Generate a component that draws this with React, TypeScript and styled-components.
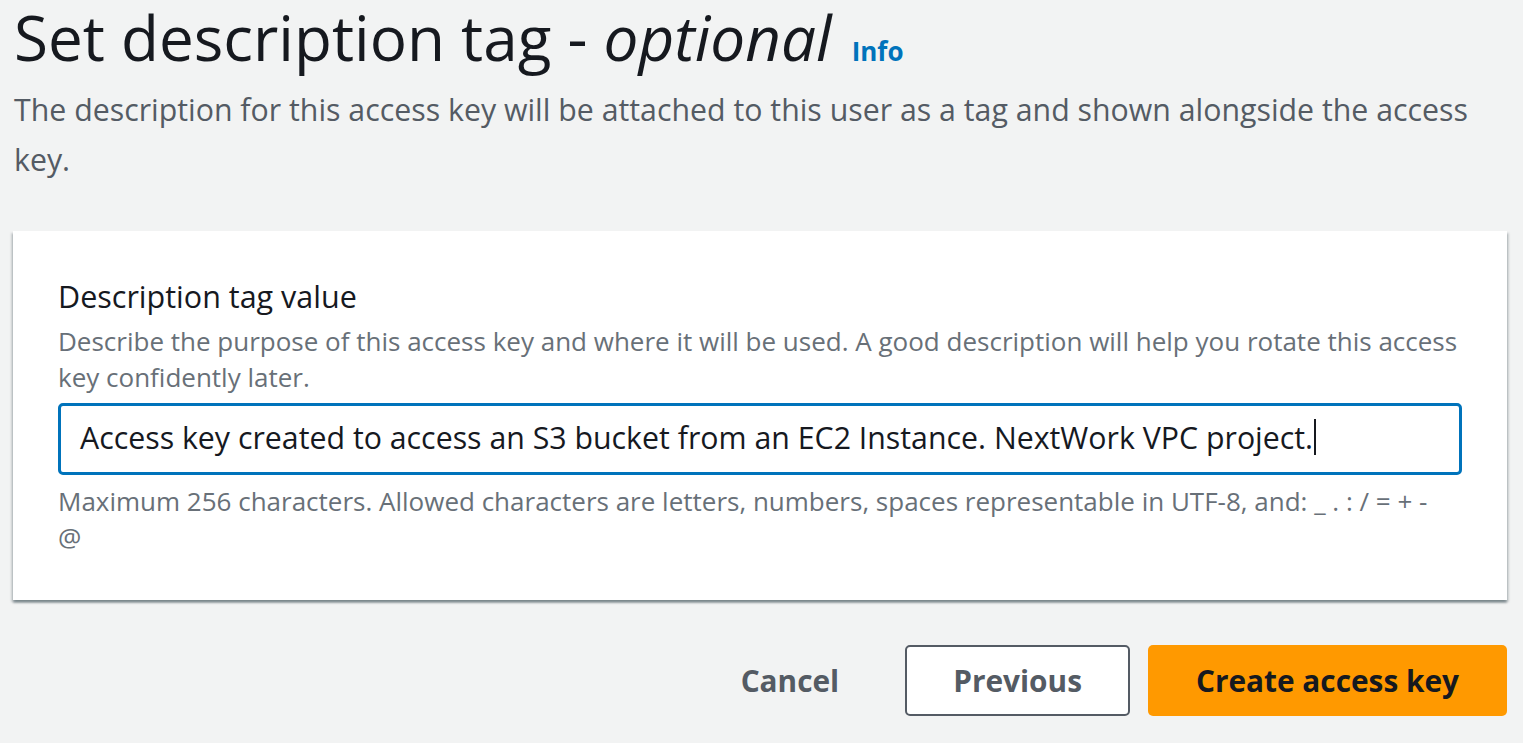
import React from "react";
import styled, { createGlobalStyle } from "styled-components";

const GlobalStyle = createGlobalStyle`
  body {
    margin: 0;
    background: #f2f3f3;
    font-family: "Open Sans", "Noto Sans", sans-serif;
    color: #16191f;
  }
`;

const Page = styled.div`
  padding: 0 16px 0 13px;
`;

const TitleRow = styled.div`
  display: flex;
  align-items: baseline;
  padding-left: 1px;
`;

const Title = styled.h1`
  margin: 0;
  font-size: 62px;
  line-height: 74px;
  font-weight: 400;
  color: #16191f;

  em {
    font-style: italic;
  }
`;

const InfoLink = styled.a`
  margin-left: 20px;
  font-size: 26px;
  font-weight: 700;
  color: #0073bb;
  text-decoration: none;
`;

const Description = styled.p`
  margin: 11px 0 0 1px;
  font-size: 30.3px;
  line-height: 50px;
  color: #545b64;
`;

const Card = styled.section`
  margin-top: 46px;
  background: #fff;
  padding: 47px 45px 45px 45px;
  box-shadow: 0 3px 2px 0 rgba(0, 28, 36, 0.3),
    2px 2px 2px 0 rgba(0, 28, 36, 0.15), -2px 2px 2px 0 rgba(0, 28, 36, 0.15);
`;

const Label = styled.div`
  font-size: 30.5px;
  line-height: 36px;
  color: #16191f;
`;

const Hint = styled.div<{ $top: number; $maxWidth?: number }>`
  margin-top: ${(p) => p.$top}px;
  max-width: ${(p) => (p.$maxWidth ? `${p.$maxWidth}px` : "none")};
  font-size: 26px;
  line-height: 36px;
  color: #687078;
`;

const InputBox = styled.div`
  margin-top: 8px;
  height: 72px;
  box-sizing: border-box;
  border: 3px solid #0073bb;
  border-radius: 5px;
  padding: 0 19px 4px;
  display: flex;
  align-items: center;
  font-size: 30.3px;
  color: #16191f;
  background: #fff;
`;

const Caret = styled.span`
  display: inline-block;
  width: 2px;
  height: 36px;
  margin-left: 1px;
  background: #16191f;
`;

const Footer = styled.div`
  display: flex;
  justify-content: flex-end;
  align-items: center;
  gap: 18px;
  margin-top: 45px;
`;

const Button = styled.button<{ $variant: "link" | "normal" | "primary" }>`
  height: 71px;
  box-sizing: border-box;
  font-family: inherit;
  font-size: 29.8px;
  font-weight: 700;
  border-radius: 5px;
  cursor: pointer;
  padding: 0 46px;
  border: 2px solid
    ${(p) => (p.$variant === "normal" ? "#545b64" : "transparent")};
  background: ${(p) =>
    p.$variant === "primary"
      ? "#ff9900"
      : p.$variant === "normal"
      ? "#fff"
      : "transparent"};
  color: ${(p) => (p.$variant === "primary" ? "#16191f" : "#545b64")};
`;

export default function App() {
  return (
    <Page>
      <GlobalStyle />
      <TitleRow>
        <Title>
          Set description tag - <em>optional</em>
        </Title>
        <InfoLink href="#">Info</InfoLink>
      </TitleRow>
      <Description>
        The description for this access key will be attached to this user as a
        tag and shown alongside the access key.
      </Description>

      <Card>
        <Label>Description tag value</Label>
        <Hint $top={9}>
          Describe the purpose of this access key and where it will be used. A
          good description will help you rotate this access key confidently
          later.
        </Hint>
        <InputBox>
          Access key created to access an S3 bucket from an EC2 Instance.
          NextWork VPC project.
          <Caret />
        </InputBox>
        <Hint $top={8} $maxWidth={1390}>
          Maximum 256 characters. Allowed characters are letters, numbers,
          spaces representable in UTF-8, and: _ . : / = + - @
        </Hint>
      </Card>

      <Footer>
        <Button $variant="link">Cancel</Button>
        <Button $variant="normal">Previous</Button>
        <Button $variant="primary">Create access key</Button>
      </Footer>
    </Page>
  );
}
